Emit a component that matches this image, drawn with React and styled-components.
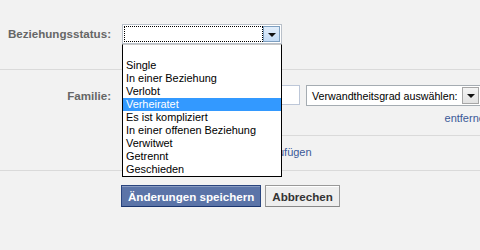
import React from 'react';
import styled, { createGlobalStyle } from 'styled-components';

const GlobalStyle = createGlobalStyle`
  body {
    margin: 0;
    background: #f2f2f2;
    overflow: hidden;
    font-family: "Liberation Sans", Arial, sans-serif;
    font-size: 11px;
  }
`

const StyledPage = styled.div`
  width: 520px;
`

const StyledSection = styled.div`
  display: flex;
  align-items: flex-start;
  padding: ${props => props.pad};
  border-bottom: 1px solid #dadada;
`

const StyledLabel = styled.div`
  width: 111px;
  padding: ${props => props.top || 0}px 11px 0px 0px;
  text-align: right;
  font-weight: bold;
  font-size: 11.6px;
  color: #666666;
  flex-shrink: 0;
  white-space: nowrap;
`

const StyledColumn = styled.div`
  display: flex;
  flex-direction: column;
  width: 369px;
`

const StyledSelectWrap = styled.div`
  position: relative;
  width: 160px;
`

const StyledSelect = styled.div`
  display: flex;
  align-items: stretch;
  box-sizing: border-box;
  width: ${props => props.width}px;
  height: ${props => props.height}px;
  padding: 1px;
  background: #ffffff;
  border: 1px solid ${props => props.focused ? '#b9c0c9' : '#a5acb2'};
`

const StyledSelectText = styled.div`
  flex: 1;
  padding: 0px 0px 0px 3px;
  line-height: 17px;
  font-size: 10.7px;
  color: #000000;
  border: 1px ${props => props.focused ? 'dotted #000000' : 'solid transparent'};
  white-space: nowrap;
  overflow: hidden;
`

const StyledArrowButton = styled.div`
  display: flex;
  align-items: center;
  justify-content: center;
  box-sizing: border-box;
  width: 17px;
  flex-shrink: 0;
  border: 1px solid ${props => props.focused ? '#7d9fc0' : '#a6a6a6'};
  background: ${props => props.focused
    ? 'linear-gradient(#e2eefb, #c4dcf6)'
    : 'linear-gradient(#f4f4f4, #e2e2e2)'};

  &::after {
    content: '';
    border-left: 4px solid transparent;
    border-right: 4px solid transparent;
    border-top: 4px solid #111111;
    margin-top: 1px;
  }
`

const StyledDropdown = styled.ul`
  position: absolute;
  top: 20px;
  left: 0px;
  box-sizing: border-box;
  width: 160px;
  margin: 0;
  padding: 1px 0px 0px 0px;
  list-style: none;
  background: #ffffff;
  border: 1px solid #000000;
  border-top-color: #c8c8c8;
  z-index: 2;
`

const StyledOption = styled.li`
  height: 13px;
  padding: 0px 0px 0px 3px;
  line-height: 13px;
  font-size: 10.9px;
  color: ${props => props.active ? '#ffffff' : '#000000'};
  background: ${props => props.active ? '#3399ff' : 'transparent'};
  white-space: nowrap;
`

const StyledInputRow = styled.div`
  display: flex;
  gap: 6px;
`

const StyledInput = styled.div`
  box-sizing: border-box;
  width: 178px;
  height: 20px;
  background: #ffffff;
  border: 1px solid #bdc7d8;
`

const StyledRemove = styled.div`
  display: flex;
  justify-content: flex-end;
  padding: 5px 0px 10px 0px;
  border-bottom: 1px solid #dadada;
`

const StyledLink = styled.a`
  color: #3b5998;
  font-size: 11px;
  line-height: 14px;
  text-decoration: none;
  cursor: pointer;
`

const StyledAddRow = styled.div`
  padding: 9px 0px 11px 7px;
`

const StyledButtonRow = styled.div`
  display: flex;
  gap: 4px;
  padding: 14px 0px 0px 121px;
`

const StyledButton = styled.button`
  box-sizing: border-box;
  height: 22px;
  padding: 0px 6px;
  font-family: "Liberation Sans", Arial, sans-serif;
  font-size: 11.6px;
  font-weight: bold;
  color: ${props => props.primary ? '#ffffff' : '#333333'};
  background: ${props => props.primary ? '#5b74a8' : '#eeeeee'};
  border: 1px solid ${props => props.primary ? '#29447e' : '#999999'};
  border-bottom-color: ${props => props.primary ? '#1a356e' : '#888888'};
  box-shadow: inset 0 1px 0 ${props => props.primary ? '#8a9cc2' : '#ffffff'};
  cursor: pointer;
`

const options = [
  '',
  'Single',
  'In einer Beziehung',
  'Verlobt',
  'Verheiratet',
  'Es ist kompliziert',
  'In einer offenen Beziehung',
  'Verwitwet',
  'Getrennt',
  'Geschieden',
];

function App() {
  return (
    <StyledPage>
      <GlobalStyle />
      <StyledSection pad="24px 0px 25px 0px">
        <StyledLabel top={3}>Beziehungsstatus:</StyledLabel>
        <StyledSelectWrap>
          <StyledSelect width={160} height={20} focused>
            <StyledSelectText focused />
            <StyledArrowButton focused />
          </StyledSelect>
          <StyledDropdown>
            {options.map((opt, i) => (
              <StyledOption key={i} active={opt === 'Verheiratet'}>{opt}</StyledOption>
            ))}
          </StyledDropdown>
        </StyledSelectWrap>
      </StyledSection>

      <StyledSection pad="15px 0px 0px 0px">
        <StyledLabel top={4}>Familie:</StyledLabel>
        <StyledColumn>
          <StyledInputRow>
            <StyledInput />
            <StyledSelect width={175} height={21}>
              <StyledSelectText>Verwandtheitsgrad auswählen:</StyledSelectText>
              <StyledArrowButton />
            </StyledSelect>
          </StyledInputRow>
          <StyledRemove>
            <StyledLink>entfernen</StyledLink>
          </StyledRemove>
          <StyledAddRow>
            <StyledLink>Weiteres Familienmitglied hinzufügen</StyledLink>
          </StyledAddRow>
        </StyledColumn>
      </StyledSection>

      <StyledButtonRow>
        <StyledButton primary>Änderungen speichern</StyledButton>
        <StyledButton>Abbrechen</StyledButton>
      </StyledButtonRow>
    </StyledPage>
  );
}

export default App;
